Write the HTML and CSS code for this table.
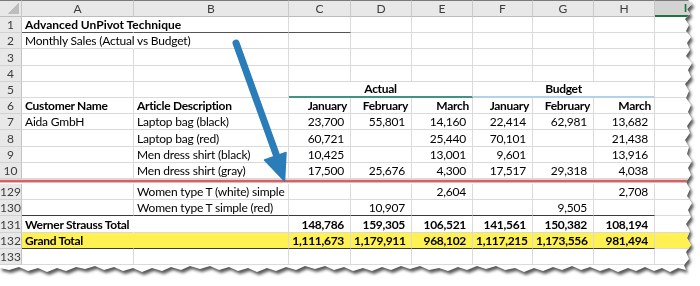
FILE: index.html
```html
<!DOCTYPE html>
<html lang="en">
<head>
<meta charset="utf-8">
<title>Advanced UnPivot Technique</title>
<link rel="stylesheet" href="styles.css">
</head>
<body>
<div class="frame">
  <div class="paper">
    <table class="sheet">
      <colgroup>
        <col class="w-rh"><col class="w-a"><col class="w-b"><col class="w-c"><col class="w-d"><col class="w-e"><col class="w-f"><col class="w-g"><col class="w-h"><col class="w-i">
      </colgroup>
      <thead>
        <tr class="hdr">
          <th class="corner"></th><th class="ch">A</th><th class="ch">B</th><th class="ch">C</th><th class="ch">D</th><th class="ch">E</th><th class="ch">F</th><th class="ch">G</th><th class="ch">H</th><th class="ch sel">I</th>
        </tr>
      </thead>
      <tbody>
        <tr class="r"><td class="rh">1</td><td class="b title nr ul">Advanced UnPivot Technique</td><td class="ul"></td><td class="ul"></td><td></td><td></td><td></td><td></td><td></td><td></td></tr>
        <tr class="r"><td class="rh">2</td><td class="nr">Monthly Sales (Actual vs Budget)</td><td></td><td></td><td></td><td></td><td></td><td></td><td></td><td></td></tr>
        <tr class="r"><td class="rh">3</td><td></td><td></td><td></td><td></td><td></td><td></td><td></td><td></td><td></td></tr>
        <tr class="r"><td class="rh">4</td><td></td><td></td><td></td><td></td><td></td><td></td><td></td><td></td><td></td></tr>
        <tr class="r"><td class="rh">5</td><td></td><td></td><td colspan="3" class="b ctr grp-a">Actual</td><td colspan="3" class="b ctr grp-b">Budget</td><td></td></tr>
        <tr class="r"><td class="rh">6</td><td class="b">Customer Name</td><td class="b">Article Description</td><td class="b mh">January</td><td class="b mh">February</td><td class="b mh">March</td><td class="b mh">January</td><td class="b mh">February</td><td class="b mh">March</td><td></td></tr>
        <tr class="r"><td class="rh">7</td><td>Aida GmbH</td><td>Laptop bag (black)</td><td class="n">23,700</td><td class="n">55,801</td><td class="n">14,160</td><td class="n">22,414</td><td class="n">62,981</td><td class="n">13,682</td><td></td></tr>
        <tr class="r"><td class="rh">8</td><td></td><td>Laptop bag (red)</td><td class="n">60,721</td><td class="n"></td><td class="n">25,440</td><td class="n">70,101</td><td class="n"></td><td class="n">21,438</td><td></td></tr>
        <tr class="r"><td class="rh">9</td><td></td><td>Men dress shirt (black)</td><td class="n">10,425</td><td class="n"></td><td class="n">13,001</td><td class="n">9,601</td><td class="n"></td><td class="n">13,916</td><td></td></tr>
        <tr class="r"><td class="rh">10</td><td></td><td>Men dress shirt (gray)</td><td class="n">17,500</td><td class="n">25,676</td><td class="n">4,300</td><td class="n">17,517</td><td class="n">29,318</td><td class="n">4,038</td><td></td></tr>
        <tr class="gap"><td class="sep" colspan="10"></td></tr>
        <tr class="r2"><td class="rh">129</td><td></td><td>Women type T (white) simple</td><td class="n"></td><td class="n"></td><td class="n">2,604</td><td class="n"></td><td class="n"></td><td class="n">2,708</td><td></td></tr>
        <tr class="r2"><td class="rh">130</td><td class="tb"></td><td class="tb">Women type T simple (red)</td><td class="n tb"></td><td class="n tb">10,907</td><td class="n tb"></td><td class="n tb"></td><td class="n tb">9,505</td><td class="n tb"></td><td></td></tr>
        <tr class="r2"><td class="rh">131</td><td class="b nr">Werner Strauss Total</td><td></td><td class="n b">148,786</td><td class="n b">159,305</td><td class="n b">106,521</td><td class="n b">141,561</td><td class="n b">150,382</td><td class="n b">108,194</td><td></td></tr>
        <tr class="r2 grand"><td class="rh">132</td><td class="b nr tb">Grand Total</td><td class="tb"></td><td class="n b tb">1,111,673</td><td class="n b tb">1,179,911</td><td class="n b tb">968,102</td><td class="n b tb">1,117,215</td><td class="n b tb">1,173,556</td><td class="n b tb">981,494</td><td></td></tr>
        <tr class="r2"><td class="rh">133</td><td></td><td></td><td></td><td></td><td></td><td></td><td></td><td></td><td></td></tr>
      </tbody>
    </table>
    <svg class="arrow" width="700" height="286" viewBox="0 0 700 286" aria-hidden="true">
      <line x1="236" y1="43" x2="276" y2="154" stroke="#2a7db9" stroke-width="7" stroke-linecap="round"/>
      <polygon points="284.5,181 264.5,160 286,152.5" fill="#2a7db9" stroke="#2a7db9" stroke-width="1.5" stroke-linejoin="round"/>
    </svg>
  </div>
</div>
</body>
</html>
```
FILE: styles.css
```css
html, body {
  margin: 0;
  padding: 0;
  background: #fff;
}
body {
  width: 700px;
  height: 286px;
  overflow: hidden;
}
.frame {
  width: 700px;
  height: 286px;
  filter: drop-shadow(2px 3px 1.5px rgba(0, 0, 0, 0.65));
}
.paper {
  position: relative;
  width: 700px;
  height: 286px;
  overflow: hidden;
  background: #fff;
  clip-path: polygon(
    0 0, 688px 0, 692px 4px, 687px 9px, 690px 14px, 685px 19px, 689px 25px, 686px 31px, 691px 37px, 687px 43px,
    690px 50px, 686px 56px, 692px 63px, 688px 70px, 691px 77px, 685px 84px, 689px 91px, 686px 98px, 691px 105px,
    688px 112px, 692px 119px, 687px 126px, 690px 133px, 685px 140px, 689px 147px, 687px 154px, 692px 161px,
    688px 168px, 691px 175px, 686px 182px, 690px 189px, 687px 196px, 692px 203px, 688px 210px, 691px 217px,
    686px 224px, 690px 231px, 687px 238px, 691px 245px, 686px 252px, 689px 259px, 684px 265px, 686px 270px,
    678px 268px, 670px 272px, 662px 268px, 654px 271px, 645px 267px, 636px 271px, 628px 268px, 618px 272px,
    609px 268px, 600px 271px, 590px 267px, 581px 270px, 572px 266px, 562px 270px, 553px 267px, 543px 271px,
    534px 268px, 524px 272px, 515px 268px, 505px 270px, 496px 266px, 486px 269px, 477px 266px, 467px 270px,
    458px 267px, 448px 271px, 439px 268px, 429px 270px, 420px 266px, 410px 269px, 401px 266px, 391px 270px,
    382px 267px, 372px 271px, 363px 268px, 353px 271px, 344px 267px, 334px 270px, 325px 266px, 315px 269px,
    305px 266px, 296px 270px, 286px 267px, 276px 271px, 267px 268px, 257px 272px, 248px 268px, 238px 271px,
    229px 267px, 219px 270px, 210px 266px, 200px 269px, 190px 266px, 181px 270px, 171px 267px, 162px 271px,
    152px 268px, 142px 272px, 133px 268px, 123px 271px, 114px 267px, 104px 270px, 95px 266px, 85px 269px,
    76px 267px, 66px 271px, 57px 268px, 47px 272px, 38px 268px, 28px 271px, 19px 267px, 9px 270px, 0 268px
  );
}
.sheet {
  table-layout: fixed;
  border-collapse: separate;
  border-spacing: 0;
  width: 717px;
  font-family: Lato, "Liberation Sans", sans-serif;
  font-size: 12px;
  letter-spacing: -0.2px;
  color: #000;
}
.w-rh { width: 22px; }
.w-a { width: 112px; }
.w-b { width: 155px; }
.w-c { width: 62px; }
.w-d { width: 61px; }
.w-e { width: 61px; }
.w-f { width: 60px; }
.w-g { width: 61px; }
.w-h { width: 61px; }
.w-i { width: 62px; }

.sheet td, .sheet th {
  padding: 0 3px;
  white-space: nowrap;
  overflow: visible;
  text-align: left;
  vertical-align: bottom;
  line-height: 14px;
  border-right: 1px solid #dadada;
  border-bottom: 1px solid #dadada;
  font-weight: normal;
}
.hdr { height: 16px; }
.r { height: 16.2px; }
.r2 { height: 16.3px; }
.gap { height: 5px; }

.sheet th {
  background: #e8e8e8;
  color: #3c3c3c;
  text-align: center;
  vertical-align: middle;
  letter-spacing: 0;
  border-top: 1px solid #7a7a7a;
  border-right: 1px solid #c9c9c9;
  border-bottom: 1px solid #bcbcbc;
  padding: 0;
}
.sheet th.corner {
  background: #e8e8e8 linear-gradient(to bottom right, transparent 50%, #bdbdbd 50%) no-repeat right 2px bottom 2px / 12px 11px;
}
.sheet th.sel {
  background: #d3d3d3;
  color: #217346;
  font-weight: bold;
  border-bottom: 2px solid #217346;
}
.sheet td.rh {
  background: #e8e8e8;
  color: #3c3c3c;
  text-align: center;
  letter-spacing: 0;
  padding: 0;
  border-right: 1px solid #c3c3c3;
  border-bottom: 1px solid #d2d2d2;
}
.sheet td.b { font-weight: bold; letter-spacing: -0.3px; }
.sheet td.title { letter-spacing: 0; }
.sheet td.ctr { text-align: center; }
.sheet td.n { text-align: right; padding-right: 6px; }
.sheet td.mh { text-align: right; padding-right: 3px; }
.sheet td.nr { border-right-color: transparent; }
.sheet td.ul { border-bottom: 1px solid #555; }
.sheet td.grp-a { border-bottom: 2px solid #3f9484; }
.sheet td.grp-b { border-bottom: 2px solid #b3d2e8; }
.sheet td.tb { border-bottom: 1px solid #3a3a3a; }
.grand td { background: #fff151; }
.grand td.rh { background: #e8e8e8; }
.sheet td.sep {
  padding: 0;
  border: 0;
  background: linear-gradient(#f1cccc 0 1px, #d06464 1px 3px, #ebb3b3 3px 4px, #ffffff 4px 5px);
}
.arrow {
  position: absolute;
  left: 0;
  top: 0;
  pointer-events: none;
}
```
